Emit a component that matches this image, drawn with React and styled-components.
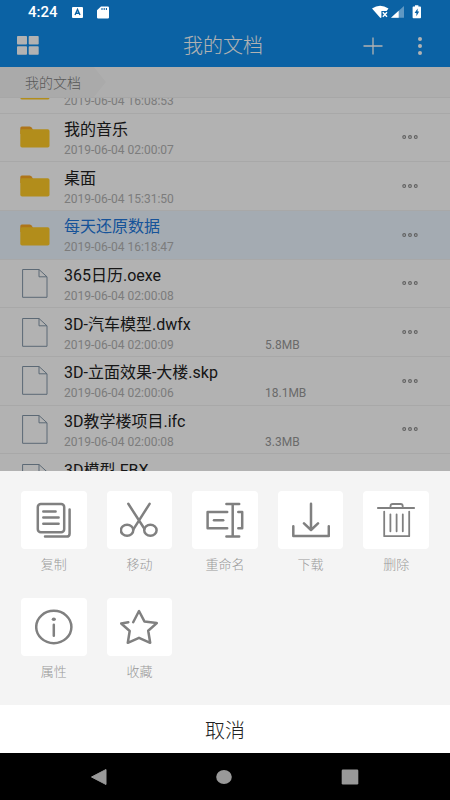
import React from "react";
import styled, { createGlobalStyle, css } from "styled-components";

const files = [
  { id: 1, name: "", date: "2019-06-04 16:08:53", type: "folder" },
  { id: 2, name: "我的音乐", date: "2019-06-04 02:00:07", type: "folder" },
  { id: 3, name: "桌面", date: "2019-06-04 15:31:50", type: "folder" },
  { id: 4, name: "每天还原数据", date: "2019-06-04 16:18:47", type: "folder", selected: true },
  { id: 5, name: "365日历.oexe", date: "2019-06-04 02:00:08", type: "file" },
  { id: 6, name: "3D-汽车模型.dwfx", date: "2019-06-04 02:00:09", size: "5.8MB", type: "file" },
  { id: 7, name: "3D-立面效果-大楼.skp", date: "2019-06-04 02:00:06", size: "18.1MB", type: "file" },
  { id: 8, name: "3D教学楼项目.ifc", date: "2019-06-04 02:00:08", size: "3.3MB", type: "file" },
  { id: 9, name: "3D模型.FBX", date: "", type: "file" },
];

const actions = [
  { label: "复制", icon: CopyIcon },
  { label: "移动", icon: CutIcon },
  { label: "重命名", icon: RenameIcon },
  { label: "下载", icon: DownloadIcon },
  { label: "删除", icon: TrashIcon },
  { label: "属性", icon: InfoIcon },
  { label: "收藏", icon: StarIcon },
];

function App() {
  return (
    <Screen>
      <GlobalStyle />
      <Page>
        <StatusBar>
          <StatusGroup>
            <Time>4:24</Time>
            <KeyboardIcon />
            <SdCardIcon />
          </StatusGroup>
          <StatusIcons />
        </StatusBar>
        <Header>
          <IconButton aria-label="grid">
            <GridIcon />
          </IconButton>
          <Title>我的文档</Title>
          <HeaderRight>
            <IconButton aria-label="add">
              <PlusIcon />
            </IconButton>
            <IconButton aria-label="menu">
              <MenuIcon />
            </IconButton>
          </HeaderRight>
        </Header>
        <Breadcrumb>
          <Crumb href="#">我的文档</Crumb>
          <CrumbArrow viewBox="0 0 12 30" aria-hidden="true">
            <path d="M0 0L12 15L0 30Z" fill="#f4f4f4" />
          </CrumbArrow>
        </Breadcrumb>
        <ListArea>
          <FileList>
            {files.map((file) => (
              <FileRow key={file.id} $selected={file.selected}>
                <FileIconBox>
                  {file.type === "folder" ? <FolderIcon /> : <FileIcon />}
                </FileIconBox>
                <FileText>
                  <FileName $selected={file.selected}>{file.name}</FileName>
                  <FileMeta>
                    <FileDate>{file.date}</FileDate>
                    <FileSize>{file.size}</FileSize>
                  </FileMeta>
                </FileText>
                <MoreButton aria-label="more">
                  <MoreIcon />
                </MoreButton>
              </FileRow>
            ))}
          </FileList>
        </ListArea>
        <Dim />
      </Page>
      <Sheet>
        <ActionGrid>
          {actions.map(({ label, icon: Icon }) => (
            <Action key={label}>
              <Tile>
                <Icon />
              </Tile>
              <ActionLabel>{label}</ActionLabel>
            </Action>
          ))}
        </ActionGrid>
        <CancelButton>取消</CancelButton>
      </Sheet>
      <SystemNav>
        <NavButton aria-label="back">
          <svg width="16" height="16" viewBox="0 0 16 16">
            <path d="M0.5 8L15 0.5V15.5Z" fill="#999" stroke="#999" strokeLinejoin="round" />
          </svg>
        </NavButton>
        <NavButton aria-label="home">
          <svg width="16" height="16" viewBox="0 0 16 16">
            <ellipse cx="8" cy="8" rx="7.8" ry="7" fill="#999" />
          </svg>
        </NavButton>
        <NavButton aria-label="recent">
          <svg width="18" height="16" viewBox="0 0 18 16">
            <rect x="0.7" y="0.5" width="16.6" height="15" rx="1.2" fill="#999" />
          </svg>
        </NavButton>
      </SystemNav>
    </Screen>
  );
}

export default App;

function KeyboardIcon() {
  return (
    <svg width="11" height="11" viewBox="0 0 11 11">
      <rect width="11" height="11" rx="1" fill="#fff" />
      <path
        d="M3 8L5.5 2.4L8 8M3.9 6.3H7.1"
        fill="none"
        stroke="#0b63a5"
        strokeWidth="1.4"
      />
    </svg>
  );
}

function SdCardIcon() {
  return (
    <svg width="12" height="13" viewBox="0 0 12 13">
      <path
        d="M4 0.5H10.8Q12 0.5 12 1.6V11.4Q12 12.5 10.8 12.5H1.2Q0 12.5 0 11.4V4.3Z"
        fill="#fff"
      />
      <path d="M5 2V4M7.2 2V4M9.4 2V4" stroke="#0b63a5" strokeWidth="1.1" />
    </svg>
  );
}

function StatusIcons() {
  return (
    <svg width="50" height="14" viewBox="0 0 50 14">
      <path d="M0 3.6Q8 -2 16.5 3.6L14.6 6H9.4V12.4L8.4 13Z" fill="#fff" />
      <path d="M10.8 7.2L15 11.8M15 7.2L10.8 11.8" stroke="#fff" strokeWidth="1.4" />
      <path d="M19 12.8L32 1V12.8Z" fill="#fff" opacity="0.35" />
      <path d="M19 12.8L26.7 5.8V12.8Z" fill="#fff" />
      <path
        d="M43 0.2H46.4V1.6H48.2Q49 1.6 49 2.4V12.3Q49 13.2 48.2 13.2H41.4Q40.6 13.2 40.6 12.3V2.4Q40.6 1.6 41.4 1.6H43Z"
        fill="#fff"
      />
      <path d="M45.6 3.6L42.6 8H44.4V11.2L47.2 6.6H45.6Z" fill="#0b63a5" />
    </svg>
  );
}

function GridIcon() {
  return (
    <svg width="22" height="19" viewBox="0 0 22 19" fill="#fff">
      <rect width="10" height="8.6" rx="0.8" />
      <rect x="11.7" width="10" height="8.6" rx="0.8" />
      <rect y="10.2" width="10" height="8.6" rx="0.8" />
      <rect x="11.7" y="10.2" width="10" height="8.6" rx="0.8" />
    </svg>
  );
}

function PlusIcon() {
  return (
    <svg width="20" height="18" viewBox="0 0 20 18">
      <path d="M0.5 9H19.5M10 0.5V17.5" stroke="#fff" strokeWidth="1.3" />
    </svg>
  );
}

function MenuIcon() {
  return (
    <svg width="6" height="18" viewBox="0 0 6 18" fill="#fff">
      <circle cx="3" cy="2" r="2" />
      <circle cx="3" cy="9" r="2" />
      <circle cx="3" cy="16" r="2" />
    </svg>
  );
}

function FolderIcon() {
  return (
    <svg width="30" height="22" viewBox="0 0 30 22">
      <path d="M0.3 2Q0.3 0.5 1.8 0.5H9.6Q10.5 0.5 11.2 1.3L13 3.6V8H0.3Z" fill="#f9a825" />
      <rect x="0.3" y="3.2" width="29.2" height="18.3" rx="1.8" fill="#ffca28" />
    </svg>
  );
}

function FileIcon() {
  return (
    <svg width="26" height="29" viewBox="0 0 26 29" fill="none" stroke="#8497a8">
      <path d="M0.6 0.5H17L25 7.8V28.3H0.6Z" />
      <path d="M17 0.5V7.8H25" />
    </svg>
  );
}

function MoreIcon() {
  return (
    <svg width="16" height="4" viewBox="0 0 16 4" fill="none" stroke="#8c8c8c" strokeWidth="1.1">
      <circle cx="2.2" cy="2" r="1.4" />
      <circle cx="8" cy="2" r="1.4" />
      <circle cx="13.8" cy="2" r="1.4" />
    </svg>
  );
}

function CopyIcon() {
  return (
    <ActionSvg>
      <rect x="2.8" y="1.9" width="26.4" height="28.3" rx="3" />
      <path d="M8.3 9.6H20.6M8.3 15.6H23.6M8.3 21.7H23.6" />
      <path d="M34.6 7.5V31.4Q34.6 34.6 31.6 34.6H10" />
    </ActionSvg>
  );
}

function CutIcon() {
  return (
    <ActionSvg>
      <path d="M8.3 1.8L24.4 26.8M29.6 1.8L13.2 27.6" />
      <ellipse cx="7.1" cy="28.3" rx="6.2" ry="5.5" />
      <ellipse cx="30.4" cy="28.3" rx="6.2" ry="5.5" />
    </ActionSvg>
  );
}

function RenameIcon() {
  return (
    <ActionSvg>
      <path d="M21.2 10H1.6V26.3H21.2" />
      <path d="M8 18.2H17.2" />
      <path d="M26.7 2V34.5M20.4 2H33.2M20.4 34.5H33.2" />
      <path d="M32.3 10H36.2V26.3H32.3" />
    </ActionSvg>
  );
}

function DownloadIcon() {
  return (
    <ActionSvg>
      <path d="M19 1.8V27.4M12 21.4L19 28L26 21.4" />
      <path d="M1.3 24.2V34H36.8V24.2" />
    </ActionSvg>
  );
}

function TrashIcon() {
  return (
    <ActionSvg $thin>
      <path d="M0.8 6H37.2" />
      <path d="M13.5 5.5V4Q13.5 2 15.7 2H23.6Q25.7 2 25.7 4V5.5" />
      <path d="M7.2 9.6V34.2H32.2V9.6" />
      <path d="M13.4 12.3V29.3M19.6 12.3V29.3M25.8 12.3V29.3" />
    </ActionSvg>
  );
}

function InfoIcon() {
  return (
    <ActionSvg>
      <ellipse cx="18.8" cy="18" rx="17.6" ry="16.2" />
      <path d="M18.8 15.8V26.8" />
      <ellipse cx="18.8" cy="10.2" rx="2.1" ry="1.8" fill="#808080" stroke="none" />
    </ActionSvg>
  );
}

function StarIcon() {
  return (
    <ActionSvg>
      <path d="M8.3 13.2L1.2 14.5L9.7 22L7.8 33.8L19 28.8L30.2 33.8L28.2 21.8L36.8 14.1L24.4 12.4L19 2L13.2 13.2" />
    </ActionSvg>
  );
}

const GlobalStyle = createGlobalStyle`
  * {
    box-sizing: border-box;
  }

  body {
    margin: 0;
    font-family: Roboto, "Noto Sans CJK SC", sans-serif;
  }

  button {
    padding: 0;
    border: none;
    background: none;
    font-family: inherit;
    cursor: pointer;
  }

  svg {
    display: block;
  }
`;

const Screen = styled.div`
  display: flex;
  flex-direction: column;
  height: 100vh;
  background: #fff;
`;

const Page = styled.div`
  position: relative;
  display: flex;
  flex: 1;
  flex-direction: column;
  min-height: 0;
  background: #fff;
`;

const Dim = styled.div`
  position: absolute;
  inset: 0;
  z-index: 1;
  background: rgba(0, 0, 0, 0.3);
`;

const StatusBar = styled.div`
  display: flex;
  align-items: center;
  justify-content: space-between;
  height: 24px;
  padding: 0 28px;
  background: #108deb;

  > * {
    position: relative;
    z-index: 2;
  }
`;

const StatusGroup = styled.div`
  display: flex;
  align-items: center;
  gap: 14px;
`;

const Time = styled.span`
  color: #fff;
  font-size: 15px;
  font-weight: 500;
  line-height: 24px;
`;

const Header = styled.header`
  display: grid;
  grid-template-columns: 1fr auto 1fr;
  align-items: center;
  height: 43px;
  padding: 0 27px 0 17px;
  background: #108deb;
`;

const Title = styled.h1`
  margin: 0;
  padding-left: 6px;
  color: #fff;
  font-size: 20px;
  font-weight: 300;
  line-height: 24px;
`;

const HeaderRight = styled.div`
  display: flex;
  justify-content: flex-end;
  gap: 34px;
`;

const IconButton = styled.button`
  display: flex;
  align-items: center;
`;

const Breadcrumb = styled.nav`
  display: flex;
  height: 31px;
  border-bottom: 1px solid #f0f0f0;
  background: #fafafa;
`;

const Crumb = styled.a`
  padding: 0 13px 0 25px;
  background: #f4f4f4;
  color: #808080;
  font-size: 14px;
  font-weight: 300;
  line-height: 32px;
  text-decoration: none;
`;

const CrumbArrow = styled.svg`
  width: 12px;
  height: 30px;
`;

const ListArea = styled.div`
  flex: 1;
  min-height: 0;
  overflow: hidden;
`;

/* scrolled part of a row down, so the first entry is cut by the breadcrumb */
const FileList = styled.ul`
  display: grid;
  grid-auto-rows: 1fr;
  height: 438px;
  margin: -33px 0 0;
  padding: 0;
  list-style: none;
`;

const FileRow = styled.li`
  display: flex;
  align-items: center;
  border-bottom: 1px solid #f1f1f1;

  ${({ $selected }) =>
    $selected &&
    css`
      background: #ebf5ff;
    `}
`;

const FileIconBox = styled.div`
  display: flex;
  justify-content: center;
  width: 64px;
  padding-right: 6px;
  padding-left: 12px;
`;

const FileText = styled.div`
  flex: 1;
  padding-top: 1px;
`;

const FileName = styled.div`
  height: 24px;
  color: ${({ $selected }) => ($selected ? "#2178dc" : "#222")};
  font-size: 16px;
  line-height: 24px;
`;

const FileMeta = styled.div`
  display: flex;
  height: 16px;
  font-size: 12px;
  line-height: 16px;
`;

const FileDate = styled.span`
  flex: 0 0 201px;
  color: #b2b2b2;
`;

const FileSize = styled.span`
  color: #999;
`;

const MoreButton = styled.button`
  display: flex;
  align-items: center;
  justify-content: center;
  width: 40px;
  height: 40px;
  margin-right: 20px;
`;

const Sheet = styled.section`
  background: #f4f4f4;
`;

const ActionGrid = styled.div`
  display: grid;
  grid-template-columns: repeat(5, 1fr);
  gap: 24px 20px;
  padding: 20px 21px 24px;
`;

const Action = styled.button`
  display: flex;
  flex-direction: column;
  gap: 7px;
`;

const Tile = styled.span`
  display: flex;
  align-items: center;
  justify-content: center;
  width: 100%;
  height: 58px;
  border-radius: 4px;
  background: #fff;
`;

const ActionSvg = styled.svg.attrs({ width: 38, height: 36, viewBox: "0 0 38 36" })`
  fill: none;
  stroke: #808080;
  stroke-width: ${({ $thin }) => ($thin ? "1.8px" : "2.5px")};
  stroke-linecap: round;
  stroke-linejoin: round;
`;

const ActionLabel = styled.span`
  width: 100%;
  color: #999;
  font-size: 13px;
  font-weight: 300;
  line-height: 18px;
  text-align: center;
`;

const CancelButton = styled.button`
  display: block;
  width: 100%;
  height: 48px;
  background: #fff;
  color: #222;
  font-size: 20px;
  font-weight: 300;
`;

const SystemNav = styled.nav`
  display: flex;
  align-items: center;
  justify-content: space-between;
  height: 47px;
  padding: 0 91px;
  background: #000;
`;

const NavButton = styled.button`
  display: flex;
`;
